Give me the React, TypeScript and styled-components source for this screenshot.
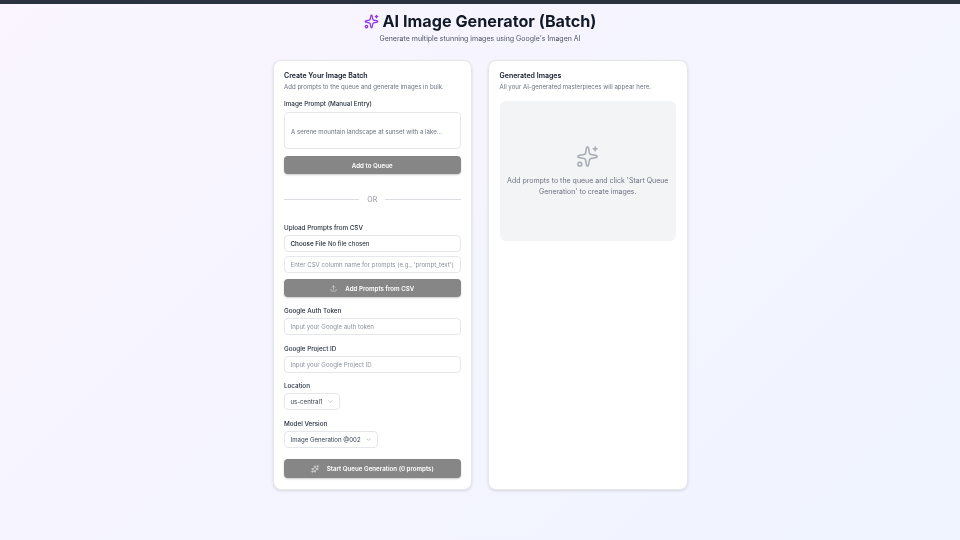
import React from "react";
import styled, { createGlobalStyle } from "styled-components";
import { ChevronDown, Upload, Sparkles } from "lucide-react";

const Global = createGlobalStyle`
  html, body { margin: 0; padding: 0; height: 100%; }
  body { font-family: Inter, "Liberation Sans", sans-serif; color: #111827; }
  * { box-sizing: border-box; }
`;
const Page = styled.div`
  width: 960px; height: 540px; overflow: hidden;
  border-top: 4px solid #2b3240;
  background: linear-gradient(135deg, #faf5ff 0%, #eff4ff 100%);
  display: flex; flex-direction: column; align-items: center;
`;
const Header = styled.header`
  display: flex; flex-direction: column; align-items: center;
  will-change: opacity;
`;
const Title = styled.h1`
  margin: 6px 0 0; height: 22px; display: flex; align-items: center; gap: 4px;
  font-size: 16.2px; font-weight: 700; line-height: 22px; color: #111827;
`;
const Subtitle = styled.p`
  margin: 1px 0 0; font-size: 7px; line-height: 12px; color: #4b5563;
`;
const Columns = styled.main`
  display: flex; gap: 16px; margin-top: 15px; align-items: stretch;
  will-change: opacity;
`;
const Card = styled.section`
  width: 199.5px; height: 430px; padding: 10px 10.5px; background: #fff;
  border: 1px solid #e5e7eb; border-radius: 8px;
  box-shadow: 0 1px 3px rgba(0,0,0,.12);
  display: flex; flex-direction: column;
`;
const CardTitle = styled.h2`
  margin: 0; font-size: 7px; font-weight: 600; line-height: 10px; color: #111827;
`;
const CardSub = styled.p`
  margin: 1px 0 0; font-size: 6.1px; line-height: 10px; color: #6b7280; white-space: nowrap;
`;
const Label = styled.label<{ $top: number }>`
  display: block; margin-top: ${p => p.$top}px; font-size: 6.3px; font-weight: 500;
  line-height: 10px; color: #1f2937;
`;
const Prompt = styled.div`
  margin-top: 3px; height: 37px; padding: 2px 6px 0; border: 1px solid #e5e7eb; border-radius: 4px;
  display: flex; align-items: center; font-size: 6.1px; color: #6b7280; white-space: nowrap;
`;
const Field = styled.div<{ $top: number }>`
  margin-top: ${p => p.$top}px; height: 17px; padding: 0 5.5px;
  border: 1px solid #e5e7eb; border-radius: 4px;
  display: flex; align-items: center; font-size: 6.1px; color: #8b919c; white-space: nowrap;
`;
const FileName = styled.span`
  color: #111827; font-size: 6.1px;
`;
const FileButton = styled.span`
  color: #111827; font-size: 6.3px; font-weight: 500; margin-right: 2px;
`;
const Action = styled.div<{ $top: number; $h?: number }>`
  margin-top: ${p => p.$top}px; height: ${p => p.$h ?? 18}px; background: #868686; border-radius: 4px;
  box-shadow: 0 1px 2px rgba(0,0,0,.2);
  display: flex; align-items: center; justify-content: center; gap: 8px;
  color: #fff; font-size: 6.2px; font-weight: 600; white-space: nowrap;
`;
const Divider = styled.div`
  margin-top: 17px; height: 16px; display: flex; align-items: center; gap: 8px;
  font-size: 7px; color: #8a8f98;
  &::before, &::after { content: ""; flex: 1; height: 1px; background: #d9dce1; }
`;
const Select = styled.div<{ $w: number }>`
  margin-top: 2px; width: ${p => p.$w}px; height: 17px; padding: 0 5.5px;
  border: 1px solid #e5e7eb; border-radius: 4px; display: flex; align-items: center;
  justify-content: space-between; font-size: 6.1px; color: #374151; white-space: nowrap;
`;
const Empty = styled.div`
  margin-top: 9px; height: 139.5px; border-radius: 6px; background: #f3f4f6;
  display: flex; flex-direction: column; align-items: center; justify-content: center;
  padding: 0 6px; text-align: center; font-size: 7px; line-height: 11px; color: #6b7280;
`;
const EmptyText = styled.p`
  margin: 7px 0 0;
`;

const Spark = ({ size, color, weight = 1.6 }: { size: number; color: string; weight?: number }) => (
  <Sparkles size={size} color={color} strokeWidth={weight} />
);

export default function App() {
  return (
    <Page>
      <Global />
      <Header>
        <Title><Spark size={15} color="#9333ea" weight={2} />AI Image Generator (Batch)</Title>
        <Subtitle>Generate multiple stunning images using Google's Imagen AI</Subtitle>
      </Header>
      <Columns>
        <Card>
          <CardTitle>Create Your Image Batch</CardTitle>
          <CardSub>Add prompts to the queue and generate images in bulk.</CardSub>
          <Label $top={7}>Image Prompt (Manual Entry)</Label>
          <Prompt>A serene mountain landscape at sunset with a lake...</Prompt>
          <Action $top={7}>Add to Queue</Action>
          <Divider>OR</Divider>
          <Label $top={16}>Upload Prompts from CSV</Label>
          <Field $top={2}><FileButton>Choose File</FileButton><FileName>No file chosen</FileName></Field>
          <Field $top={4}>Enter CSV column name for prompts (e.g., 'prompt_text')</Field>
          <Action $top={6}><Upload size={7} strokeWidth={1.5} />Add Prompts from CSV</Action>
          <Label $top={9}>Google Auth Token</Label>
          <Field $top={2}>Input your Google auth token</Field>
          <Label $top={9}>Google Project ID</Label>
          <Field $top={2}>Input your Google Project ID</Field>
          <Label $top={8}>Location</Label>
          <Select $w={56}>us-central1<ChevronDown size={7} color="#9ca3af" /></Select>
          <Label $top={9}>Model Version</Label>
          <Select $w={94}>Image Generation @002<ChevronDown size={7} color="#9ca3af" /></Select>
          <Action $top={11} $h={19}><Spark size={8} color="#fff" />Start Queue Generation (0 prompts)</Action>
        </Card>
        <Card>
          <CardTitle>Generated Images</CardTitle>
          <CardSub>All your AI-generated masterpieces will appear here.</CardSub>
          <Empty>
            <Spark size={23} color="#a6abb4" />
            <EmptyText>Add prompts to the queue and click 'Start Queue Generation' to create images.</EmptyText>
          </Empty>
        </Card>
      </Columns>
    </Page>
  );
}
